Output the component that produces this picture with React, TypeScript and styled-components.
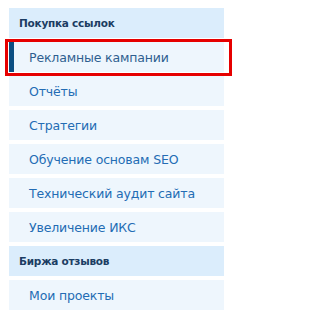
import styled, { createGlobalStyle } from 'styled-components'

const GlobalStyle = createGlobalStyle`
  html, body {
    margin: 0;
    padding: 0;
    background: #ffffff;
  }
  body {
    font-family: 'DejaVu Sans', 'Noto Sans', sans-serif;
  }
`

const Menu = styled.nav`
  display: flex;
  flex-direction: column;
  gap: 4px;
  width: 215px;
  padding: 8px 0 0 9px;
`

const GroupTitle = styled.div`
  display: flex;
  align-items: center;
  height: 30px;
  padding-left: 10px;
  background: #dbedfc;
  color: #1b3d63;
  font-size: 10.5px;
  font-weight: 700;
  letter-spacing: -0.25px;
`

const Item = styled.a<{ $active?: boolean }>`
  position: relative;
  display: flex;
  align-items: center;
  height: 30px;
  padding-left: ${(p) => (p.$active ? '15px' : '20px')};
  background: #eef6fd;
  border-left: ${(p) => (p.$active ? '5px solid #0c4f82' : 'none')};
  color: ${(p) => (p.$active ? '#2e5f90' : '#236cb4')};
  font-size: 12.5px;
  text-decoration: none;
  letter-spacing: -0.15px;
`

const Highlight = styled.span`
  position: absolute;
  top: -3px;
  left: -9px;
  right: -8px;
  bottom: -4px;
  border: 3px solid #e60000;
  pointer-events: none;
`

const links = [
  'Отчёты',
  'Стратегии',
  'Обучение основам SEO',
  'Технический аудит сайта',
  'Увеличение ИКС',
]

const App = (): JSX.Element => {
  return (
    <>
      <GlobalStyle />
      <Menu>
        <GroupTitle>Покупка ссылок</GroupTitle>
        <Item $active>
          Рекламные кампании
          <Highlight />
        </Item>
        {links.map((label) => (
          <Item key={label}>{label}</Item>
        ))}
        <GroupTitle>Биржа отзывов</GroupTitle>
        <Item>Мои проекты</Item>
      </Menu>
    </>
  )
}

export default App
